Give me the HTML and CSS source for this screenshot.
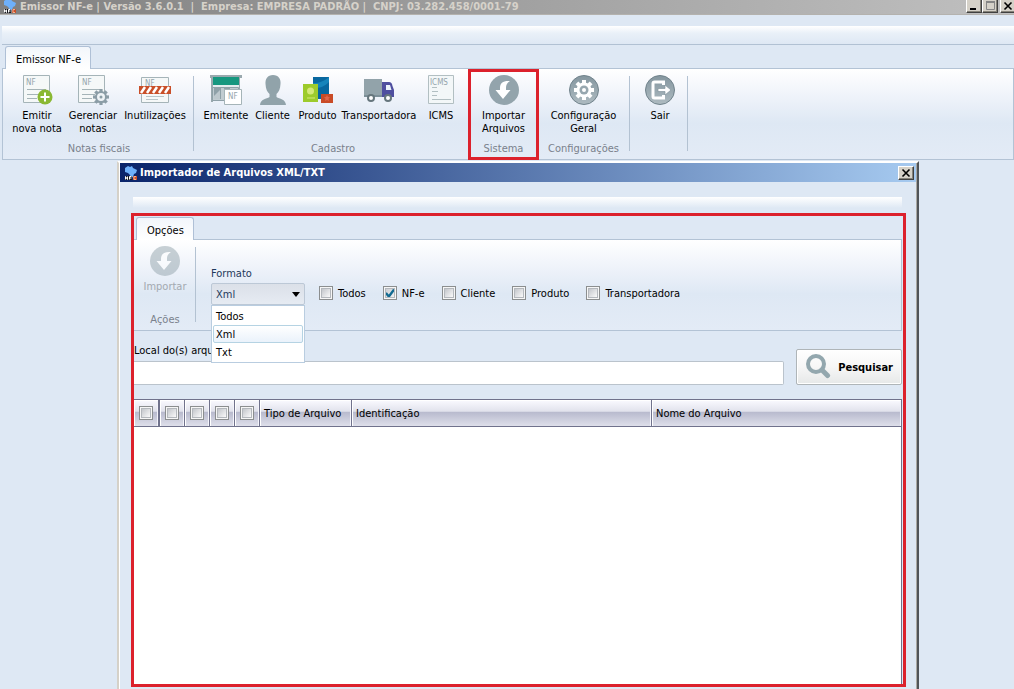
FILE: index.html
```html
<!DOCTYPE html>
<html lang="pt-BR">
<head>
<meta charset="utf-8">
<title>Emissor NF-e</title>
<link rel="stylesheet" href="styles.css">
</head>
<body>
<svg class="defs" aria-hidden="true">
  <defs>
    <linearGradient id="disc" x1="0" y1="0" x2="0" y2="1"><stop offset="0" stop-color="#84969f"/><stop offset="1" stop-color="#aebbc1"/></linearGradient>
    <symbol id="logo" viewBox="0 0 14 14">
      <path d="M1 2l3-2 2 1 2-1 1 2 4 2-1 3-2 1-1 3-2 1-1-3-2-2-3-1z" fill="#6eb0fa"/>
      <path d="M1 10h7v4H1z" fill="#14161c"/><path d="M9 10h4v4H9z" fill="#c8502a"/>
      <path d="M1.500 13.500v-3l2 3v-3M5.500 13.500v-3h2M5.500 12h2" stroke="#fff" fill="none"/><path d="M12 10.500h-2v3h2" stroke="#f4b090" fill="none"/>
    </symbol>
    <symbol id="import" viewBox="0 0 30 30">
      <circle cx="15" cy="15" r="15" fill="#93a4ac"/>
      <path d="M21 6C14 5.500 11 8 11 13v2H6.500L14 24l7.500-9H17v-2c0-3 .8-5 4-7z" fill="#fff"/>
    </symbol>
    <symbol id="gear" viewBox="-10 -10 20 20">
      <g fill="currentColor"><path d="M-2-10h4v20h-4z"/><path d="M-2-10h4v20h-4z" transform="rotate(45)"/><path d="M-2-10h4v20h-4z" transform="rotate(90)"/><path d="M-2-10h4v20h-4z" transform="rotate(135)"/><circle r="7.500"/></g>
    </symbol>
  </defs>
</svg>
<div class="app">
  <header class="titlebar main-title">
    <svg class="logo"><use href="#logo"/></svg>
    <h1 class="title">Emissor NF-e | Versão 3.6.0.1 &nbsp;|&nbsp; Empresa: EMPRESA PADRÃO | &nbsp;CNPJ: 03.282.458/0001-79</h1>
    <div class="window-buttons">
      <button class="win-btn" aria-label="Minimizar"><svg viewBox="0 0 14 12"><path d="M3 8h6v2H3z"/></svg></button>
      <button class="win-btn" aria-label="Restaurar"><svg viewBox="0 0 14 12"><path d="M3.500 2v7.500h8V2z" fill="none" stroke="#858585"/><path d="M3 1h9v2H3z" fill="#858585"/></svg></button>
      <button class="win-btn spaced" aria-label="Fechar"><svg viewBox="0 0 14 12"><path d="M3.500 2.500l7 7m0-7l-7 7" stroke="#000" stroke-width="1.600"/></svg></button>
    </div>
  </header>
  <div class="quickbar"></div>
  <nav class="tabs"><button class="tab">Emissor NF-e</button></nav>
  <div class="ribbon">
    <section class="group notas">
      <div class="tools">
        <button class="tool">
          <svg class="icon" viewBox="0 0 30 30"><path d="M1.500.500h26v27h-26z" fill="#f5f8f8" stroke="#a5b4b8"/><text x="4" y="10" class="tiny">NF</text><path d="M5 14.500h19M5 19.500h13M5 23.500h10" stroke="#a5b4b8"/><circle cx="23" cy="22" r="7.500" fill="#8ab833"/><path d="M23 17.500v9M18.500 22h9" stroke="#fff" stroke-width="2"/></svg>
          <span>Emitir<br>nova nota</span>
        </button>
        <button class="tool">
          <svg class="icon" viewBox="0 0 30 30"><path d="M.500.500h26v27H.500z" fill="#f5f8f8" stroke="#a5b4b8"/><text x="4" y="10" class="tiny">NF</text><path d="M4 14.500h19M4 19.500h13M4 23.500h10" stroke="#a5b4b8"/><use href="#gear" x="15" y="14" width="16" height="16" color="#8b9da6"/><circle cx="23" cy="22" r="4" fill="#eef3f6"/><circle cx="23" cy="22" r="1.500" fill="#8b9da6"/></svg>
          <span>Gerenciar<br>notas</span>
        </button>
        <button class="tool wide">
          <svg class="icon inut" viewBox="0 0 32 30"><path d="M2.500 2.500h27v25h-27z" fill="#f5f8f8" stroke="#a5b4b8"/><text x="6" y="11" class="tiny">NF</text><path d="M7 21.500h18M7 24.500h12" stroke="#b9c5c8"/><path d="M0 11h32v8H0z" fill="#c94f28"/><path d="M2 18l4-6M8 18l4-6M14 18l4-6M20 18l4-6M26 18l4-6" stroke="#fff" stroke-width="2.500"/></svg>
          <span>Inutilizações</span>
        </button>
      </div>
      <h2 class="caption">Notas fiscais</h2>
    </section>
    <section class="group cadastro">
      <div class="tools">
        <button class="tool w46">
          <svg class="icon inut" viewBox="0 0 32 30"><path d="M0 0h32v3H0zM1 3h2v24H1zM29 3h1v12h-1z" fill="#9aa9ae"/><path d="M3 2h26v8H3z" fill="#16977f"/><path d="M3 10h26v3H3z" fill="#e3ecee"/><path d="M2.500 12.500h26v13h-26z" fill="#c1ccd1" stroke="#8fa1a8"/><path d="M4 13h7v11H4zM14 13h6v11h-6z" fill="#8fa1a8"/><path d="M4 21l6-6v9H4z" fill="#bdc8cd"/><path d="M14.500 14.500h17v15h-17z" fill="#fff" stroke="#a5b4b8"/><text x="18" y="24" class="tiny">NF</text></svg>
          <span>Emitente</span>
        </button>
        <button class="tool w47">
          <svg class="icon" viewBox="0 0 30 30"><path d="M15 0c5.500 0 8 4 7.500 9-.3 5-1.700 8-4 10v3c3 2 9 2 9.500 8H2c.5-6 6.500-6 9.500-8v-3c-2.300-2-3.700-5-4-10C7 4 9.500 0 15 0z" fill="#91a3aa"/></svg>
          <span>Cliente</span>
        </button>
        <button class="tool w43">
          <svg class="icon" viewBox="0 0 30 30"><path d="M10 2h16v22H10z" fill="#08679f"/><path d="M10 8c7 0 11-2 16-6v5c-5 5-9 6-16 6z" fill="#1684bb"/><path d="M0 9h15v18H0z" fill="#9dcb2b"/><circle cx="7.500" cy="16" r="3.500" fill="#d5e978"/><path d="M4 23h8" stroke="#d5e978"/><path d="M18 19h12v9H18z" fill="#c94b27"/><path d="M24 20l1 2 2 .2-1.500 1.600.5 2.200-2-1-2 1 .5-2.200L21 22.200l2-.2z" fill="#e2664a"/></svg>
          <span>Produto</span>
        </button>
        <button class="tool w80">
          <svg class="icon inut" viewBox="0 0 32 30"><path d="M1 4h18v18H1z" fill="#92a3aa"/><path d="M19 22V7h7c2 0 3 1 3.500 4l1.500 4v7z" fill="#4f4f9f"/><path d="M23 10h4l1.500 5H23z" fill="#eaf2fb"/><path d="M1 20h18v2H1z" fill="#7c8f98"/><g fill="#fff" stroke="#66767d" stroke-width="2"><circle cx="8" cy="23" r="3"/><circle cx="25" cy="23" r="3"/></g></svg>
          <span>Transportadora</span>
        </button>
        <button class="tool w44">
          <svg class="icon" viewBox="0 0 30 30"><path d="M2.500.500h25v28h-25z" fill="#f3f7f8" stroke="#b2bfc2"/><text x="4" y="10" class="tiny">ICMS</text><path d="M6 12.500h5M6 16.500h6M6 20.500h5M6 24.500h19" stroke="#b2bfc2"/></svg>
          <span>ICMS</span>
        </button>
      </div>
      <h2 class="caption">Cadastro</h2>
    </section>
    <section class="group sistema">
      <div class="tools">
        <button class="tool"><svg class="icon"><use href="#import"/></svg><span>Importar<br>Arquivos</span></button>
      </div>
      <h2 class="caption">Sistema</h2>
    </section>
    <section class="group config">
      <div class="tools">
        <button class="tool">
          <svg class="icon" viewBox="0 0 30 30"><circle cx="15" cy="15" r="14.500" fill="url(#disc)" stroke="#71838c"/><use href="#gear" x="5" y="5" width="20" height="20" color="#fff"/><circle cx="15" cy="15" r="4.500" fill="#97a7af"/><circle cx="15" cy="15" r="2" fill="#fff"/></svg>
          <span>Configuração<br>Geral</span>
        </button>
      </div>
      <h2 class="caption">Configurações</h2>
    </section>
    <section class="group sair">
      <div class="tools">
        <button class="tool">
          <svg class="icon" viewBox="0 0 30 30"><circle cx="15" cy="15" r="14.500" fill="url(#disc)" stroke="#71838c"/><path d="M18.500 10V7H9.500q-1.500 0-1.500 1.500v13q0 1.500 1.500 1.500h9v-3" fill="none" stroke="#fff" stroke-width="3"/><path d="M13 13.500h7V10l6 5-6 5v-3.500h-7z" fill="#fff" stroke="#84959d" stroke-width=".7"/></svg>
          <span>Sair</span>
        </button>
      </div>
    </section>
  </div>

  <main class="dialog">
    <header class="titlebar dialog-title">
      <svg class="logo"><use href="#logo"/></svg>
      <h2 class="title">Importador de Arquivos XML/TXT</h2>
      <button class="win-btn" aria-label="Fechar"><svg viewBox="0 0 14 12"><path d="M3.500 2.500l7 7m0-7l-7 7" stroke="#000" stroke-width="1.600"/></svg></button>
    </header>
    <div class="dialog-body">
      <div class="dialog-strip"></div>
      <div class="frame">
        <nav class="tabs inner"><button class="tab">Opções</button></nav>
        <div class="options">
          <section class="group acoes">
            <div class="tools"><button class="tool" disabled><svg class="icon"><use href="#import"/></svg><span>Importar</span></button></div>
            <h3 class="caption">Ações</h3>
          </section>
          <div class="format">
            <label for="formato">Formato</label>
            <div class="combo">
              <select id="formato"><option>Todos</option><option selected>Xml</option><option>Txt</option></select>
              <ul class="menu"><li>Todos</li><li class="current">Xml</li><li>Txt</li></ul>
            </div>
          </div>
          <div class="checks">
            <label><input type="checkbox">Todos</label>
            <label><input type="checkbox" checked>NF-e</label>
            <label><input type="checkbox">Cliente</label>
            <label><input type="checkbox">Produto</label>
            <label><input type="checkbox">Transportadora</label>
          </div>
        </div>
        <div class="search">
          <div class="path"><label for="local">Local do(s) arquivo(s)</label><input id="local" type="text"></div>
          <button class="search-btn">
            <svg viewBox="0 0 26 26"><circle cx="11" cy="10" r="8" fill="none" stroke="#93a7ae" stroke-width="4"/><path d="M17 16l5.500 5.500" stroke="#93a7ae" stroke-width="5" stroke-linecap="round"/></svg>
            Pesquisar
          </button>
        </div>
        <div class="grid">
          <table>
            <colgroup><col class="c-lock"><col class="c-check"><col class="c-check"><col class="c-check"><col class="c-check"><col class="c-type"><col class="c-id"><col></colgroup>
            <thead><tr>
              <th class="lock"><input type="checkbox" aria-label="Todos"></th>
              <th><input type="checkbox" aria-label="NF-e"></th>
              <th><input type="checkbox" aria-label="Cliente"></th>
              <th><input type="checkbox" aria-label="Produto"></th>
              <th><input type="checkbox" aria-label="Transportadora"></th>
              <th class="text">Tipo de Arquivo</th><th class="text">Identificação</th><th class="text">Nome do Arquivo</th>
            </tr></thead>
          </table>
        </div>
      </div>
    </div>
  </main>
</div>
</body>
</html>
```

FILE: styles.css
```css
* { box-sizing: border-box; }
body, h1, h2, h3, ul { margin: 0; padding: 0; }
body, button, input, select {
  font: 11px/13px "DejaVu Sans Condensed", Tahoma, sans-serif;
  color: #000;
}
button { border: 0; padding: 0; background: none; }
.defs { position: absolute; width: 0; height: 0; }
.app {
  display: flex;
  flex-direction: column;
  height: 100vh;
  overflow: hidden;
  background: #dee8f4;
}

/* title bars */
.titlebar { display: flex; align-items: center; flex: none; }
.title { flex: 1; font-size: 11px; font-weight: bold; white-space: nowrap; }
.logo { width: 14px; height: 14px; flex: none; }
.main-title {
  height: 15px;
  gap: 3px;
  padding: 0 0 2px 3px;
  background: linear-gradient(90deg, #808080, #c0c0c0);
  color: #d6d2ca;
  border-bottom: 1px solid #b4b2ae;
}
.window-buttons { display: flex; margin-right: -2px; }
.win-btn {
  width: 16px;
  height: 14px;
  background: #d5d1c8;
  border: 1px solid;
  border-color: #fff #404040 #404040 #fff;
  box-shadow: inset -1px -1px #858279;
}
.win-btn svg { display: block; width: 14px; height: 12px; }
.spaced { margin-left: 2px; }

.quickbar {
  flex: none;
  height: 19px;
  margin: 11px 0 0 2px;
  background: linear-gradient(#fff, #e9f0f8 40%, #dee8f4);
  border-bottom: 1px solid #b1c1d3;
}
.tabs { flex: none; display: flex; height: 23px; padding: 1px 0 0 5px; }
.tab {
  height: 23px;
  padding: 2px 9px 0 10px;
  background: linear-gradient(#f2f6fb, #fff);
  border: 1px solid #afc0d6;
  border-bottom: 0;
  border-radius: 3px 3px 0 0;
  position: relative;
  z-index: 1;
}

/* ribbon */
.ribbon, .options {
  flex: none;
  display: flex;
  border: 1px solid #b3c3d5;
  background: linear-gradient(#fff, #eff3fa 30%, #dee8f4 60%, #e3ebf6);
}
.ribbon { height: 92px; margin-left: 2px; padding-left: 1px; }
.group {
  position: relative;
  display: flex;
  flex-direction: column;
  justify-content: space-between;
  padding: 6px 4px 4px 6px;
}
.group::after {
  content: "";
  position: absolute;
  right: 0;
  top: 7px;
  bottom: 8px;
  width: 1px;
  background: #b3c2d2;
}
.tools { display: flex; }
.tool {
  width: 56px;
  display: flex;
  flex-direction: column;
  align-items: center;
  gap: 4px;
  white-space: nowrap;
}
.notas { padding-left: 5px; padding-right: 5px; }
.icon { width: 30px; height: 30px; overflow: visible; }
.inut { width: 32px; }
.wide { width: 68px; }
.w43 { width: 43px; }
.w44 { width: 44px; }
.w46 { width: 46px; }
.w47 { width: 47px; }
.w80 { width: 80px; }
.tiny { font: 8px "DejaVu Sans Condensed", sans-serif; fill: #93a4ab; }
.caption { font-size: 11px; font-weight: normal; text-align: center; color: #7a818c; white-space: nowrap; }
.cadastro { padding-left: 9px; padding-right: 7px; }
.sistema { width: 67px; align-items: center; padding-left: 0; padding-right: 0; }
.sistema::after {
  inset: 0 -2px -1px -2px;
  width: auto;
  background: none;
  border: 3px solid #dc212c;
}
.config { width: 93px; align-items: center; padding-left: 0; padding-right: 0; }
.sair { padding-left: 2px; padding-right: 0; width: 58px; }

/* import window */
.dialog {
  flex: 1;
  min-height: 0;
  display: flex;
  flex-direction: column;
  margin: 1px 95px 0 117px;
  padding: 0 1px;
  border: 2px solid #fff;
  border-left-color: #d5d1c8;
  border-bottom: 0;
  border-right-color: #505458;
  box-shadow: inset 1px 0 #fff, inset -1px 0 #aaa8a2;
}
.dialog-title {
  height: 19px;
  gap: 2px;
  padding: 0 2px 0 4px;
  color: #fff;
  background: linear-gradient(90deg, #0a246a, #a6caf0);
}
.dialog-body { flex: 1; min-height: 0; display: flex; flex-direction: column; padding: 15px 10px 2px 11px; }
.dialog-strip { flex: none; height: 11px; margin: 0 4px 5px 2px; background: linear-gradient(#fff, #dee8f4); }
.frame { flex: 1; min-height: 0; display: flex; flex-direction: column; border: 3px solid #dc212c; padding-right: 1px; }
.inner { height: 23px; padding: 1px 0 0 2px; }
.inner .tab { padding: 2px 9px 0 10px; }
.options { height: 92px; border-left: 0; }
.acoes { width: 62px; padding: 6px 0 4px; align-items: center; }
.tool:disabled { color: #a3a9b0; }
.tool:disabled .icon { opacity: .5; }
.format { width: 94px; margin: 27px 0 0 15px; color: #1e395b; }
.format > label { display: block; margin-bottom: 3px; }
.combo { position: relative; }
select {
  appearance: none;
  display: block;
  width: 100%;
  height: 22px;
  padding: 0 4px;
  color: #1e395b;
  border: 1px solid #bcc8d6;
  border-radius: 2px;
  background: linear-gradient(#dbe0e8, #e6ebf2);
}
.combo::after {
  content: "";
  position: absolute;
  right: 5px;
  top: 9px;
  border: 4px solid transparent;
  border-top: 5px solid #000;
  border-bottom: 0;
}
.menu {
  position: absolute;
  top: 22px;
  left: 0;
  right: 0;
  z-index: 2;
  padding: 1px;
  list-style: none;
  color: #000;
  background: #fff;
  border: 1px solid #b9cde0;
}
.menu li { height: 18px; padding: 3px; }
.menu .current { padding: 2px; border: 1px solid #b5d3e3; border-radius: 2px; background: linear-gradient(#fff, #eaf2fb); }
.checks { display: flex; gap: 17px; height: 14px; margin: 46px 0 0 14px; }
.checks label { display: flex; align-items: center; gap: 5px; white-space: nowrap; }
input[type="checkbox"] {
  appearance: none;
  flex: none;
  width: 14px;
  height: 14px;
  margin: 0;
  border: 1px solid #8b8e8f;
  background: linear-gradient(135deg, #c3c6cb, #fafafa) content-box, #f3f3f3;
  padding: 2px;
  box-shadow: inset 0 0 0 1px #f6f6f6, inset 0 0 0 2px #b4b8bd;
}
.checks input:checked {
  background: url("data:image/svg+xml,%3Csvg xmlns='http://www.w3.org/2000/svg' viewBox='0 0 12 12'%3E%3Cpath d='M2.500 6l2.500 3 4.500-6' fill='none' stroke='%23126a91' stroke-width='2'/%3E%3C/svg%3E") border-box, linear-gradient(135deg, #c3c6cb, #fafafa);
}
.search { flex: none; display: flex; align-items: flex-end; gap: 12px; padding-top: 12px; }
.path { flex: 1; display: flex; flex-direction: column; gap: 4px; }
.path label { width: 77px; overflow: hidden; white-space: nowrap; }
.path input {
  width: 100%;
  height: 24px;
  border: 1px solid #bac3cc;
  border-left: 0;
  border-radius: 0 2px 2px 0;
  background: #fff;
}
.search-btn {
  width: 106px;
  height: 36px;
  display: flex;
  align-items: center;
  justify-content: space-between;
  margin-top: 6px;
  padding: 0 8px;
  font-weight: bold;
  border: 1px solid #afb5b8;
  border-radius: 2px;
  background: linear-gradient(#fff, #f6f6f6 50%, #e6e8e8);
  box-shadow: inset 0 0 0 1px #fff;
}
.search-btn svg { width: 26px; height: 26px; }
.grid { flex: 1; margin-top: 14px; background: #fff; border-right: 1px solid #70728c; }
table { width: 100%; table-layout: fixed; border-collapse: separate; border-spacing: 0; }
.c-lock { width: 26px; }
.c-check { width: 25px; }
.c-type { width: 92px; }
.c-id { width: 300px; }
th {
  height: 28px;
  padding: 0;
  font-weight: normal;
  border: solid #70728c;
  border-width: 1px 1px 1px 0;
  background: linear-gradient(#fafaff, #e1e2ec 44%, #b7b9cd 45%, #dedfea);
  box-shadow: inset 1px 1px #fff, inset -1px 0 #f4f4fb;
}
th input { display: block; }
th input[type="checkbox"] { margin: 0 auto; }
th.lock { border-right-width: 2px; }
th.text { text-align: left; padding-left: 4px; }
th:last-child { border-right: 0; }
```
